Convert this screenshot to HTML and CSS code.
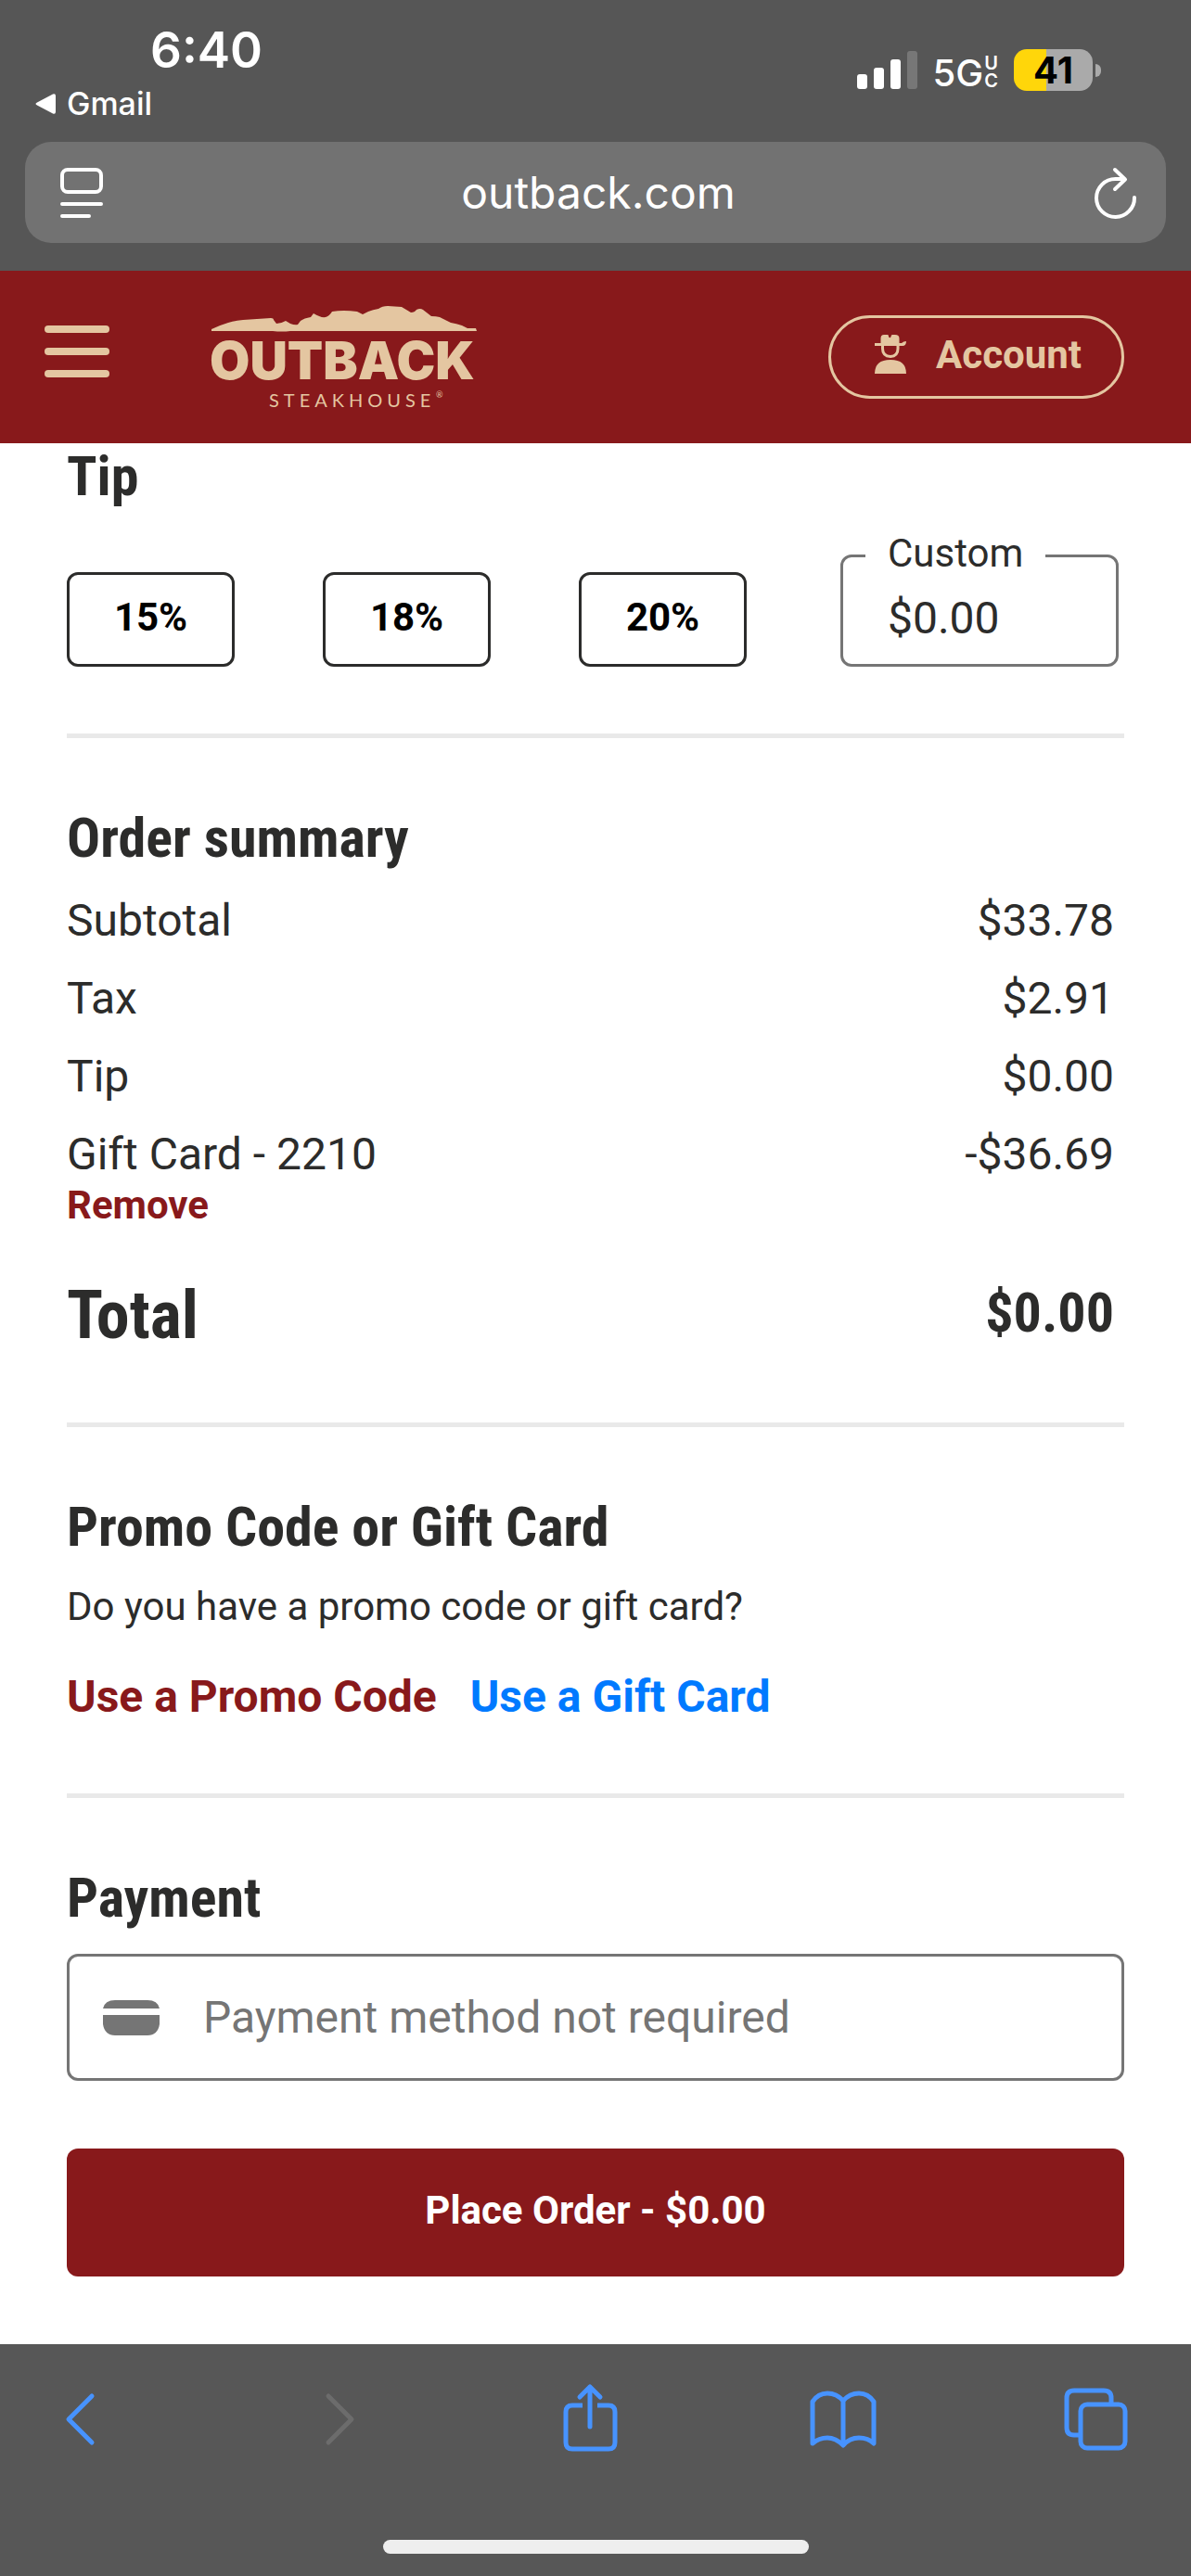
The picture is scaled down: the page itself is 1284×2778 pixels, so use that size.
FILE: index.html
```html
<!DOCTYPE html>
<html lang="en">
<head>
  <meta charset="UTF-8">
  <meta name="viewport" content="width=device-width, initial-scale=1.0">
  <title>Checkout - Outback Steakhouse</title>
  <link rel="stylesheet" href="styles.css">
</head>
<body>

  <!-- Browser top bar -->
  <div class="browser-top">
    <div class="status">
      <div class="status-left">
        <div class="time">6:40</div>
        <a class="back-app" href="#">
          <svg width="22" height="22" viewBox="0 0 22 22"><path d="M2 9.500 19 .5Q22-.5 22 2.500V19.500Q22 22.500 19 21.500L2 12.500Q-1 11 2 9.500Z" fill="#fff"/></svg>
          Gmail
        </a>
      </div>
      <div class="status-right">
        <svg width="65" height="45" viewBox="0 0 65 45" fill="#fff">
          <rect x="0" y="27" width="11" height="16" rx="3"/>
          <rect x="18" y="20" width="11" height="23" rx="3"/>
          <rect x="36" y="11" width="11" height="32" rx="3"/>
          <rect x="54" y="2" width="11" height="41" rx="3" opacity="0.2"/>
        </svg>
        <div class="network">5G<span class="network-uc"><span>U</span><span>C</span></span></div>
        <div class="battery">41</div>
      </div>
    </div>
    <div class="url-bar">
      <button class="icon-button" aria-label="Page menu">
        <svg width="46" height="54" viewBox="0 0 46 54" fill="none" stroke="#fff" stroke-width="4" stroke-linecap="round">
          <rect x="2" y="2" width="42" height="24" rx="6"/>
          <path d="M2 39H44M2 52H31"/>
        </svg>
      </button>
      <span class="url">outback.com</span>
      <button class="icon-button" aria-label="Reload">
        <svg width="46" height="54" viewBox="0 0 46 54" fill="none" stroke="#fff" stroke-width="4" stroke-linecap="round" stroke-linejoin="round">
          <path d="M44 32A20.500 20.500 0 1 1 23.500 12H33M23 2 34 12.500 23 23"/>
        </svg>
      </button>
    </div>
  </div>

  <!-- Site header -->
  <header class="site-header">
    <button class="menu-button" aria-label="Open menu">
      <span></span>
      <span></span>
      <span></span>
    </button>
    <a class="logo" href="#" aria-label="Outback Steakhouse">
      <svg width="290" height="112" viewBox="0 0 290 112" fill="#e4c6a1">
        <path d="M0 28V26Q8 22 18 19 24 17 34 16L64 14Q67 14 67 16L70 20Q75 20 80 17L85 20Q90 22 93 21L96 17Q100 14 107 13L110 9Q118 14 123 13 127 12 130 7 142 5 157 7L163 10 169 7 Q174 5 180 4 184 1 190 1L205 2Q210 5 215 8 219 8 221 5 225 3 228 5L237 12Q242 12 246 13L258 19Q264 20 270 22L276 25 285 25 286 28H85Q76 29 66 28Z"/>
        <text class="logo-name" x="-2" y="80">OUTBACK</text>
        <text class="logo-sub" x="62" y="110">STEAKHOUSE</text>
        <text class="logo-mark" x="242" y="100">®</text>
      </svg>
    </a>
    <button class="account-button">
      <svg width="34" height="42" viewBox="0 0 34 42" fill="#e4c6a1">
        <path d="M0 9H6.500V4Q6.500 0 10 0H14Q15 0 15 2 16.300 4.500 17.600 2 17.600 0 19 0H22Q26.500 0 26.500 4V9H29Q31 7 34 7 34 12 30 12H0Z"/>
        <path d="M8.500 12V15Q8.500 23 17 23.500 25 23 25 15V12" fill="none" stroke="#e4c6a1" stroke-width="3"/>
        <path d="M0 42Q0 27 17 27T34 42Z"/>
      </svg>
      Account
    </button>
  </header>

  <main class="checkout">
    <!-- Tip -->
    <section class="section tip">
      <h2>Tip</h2>
      <div class="tip-row">
        <div class="tip-options">
          <button class="tip-button">15%</button>
          <button class="tip-button">18%</button>
          <button class="tip-button">20%</button>
        </div>
        <fieldset class="custom-tip">
          <legend><label for="custom-tip">Custom</label></legend>
          <input type="text" id="custom-tip" value="$0.00">
        </fieldset>
      </div>
    </section>

    <!-- Order summary -->
    <section class="section">
      <h2>Order summary</h2>
      <div class="summary">
        <div class="row"><span>Subtotal</span><span>$33.78</span></div>
        <div class="row"><span>Tax</span><span>$2.91</span></div>
        <div class="row"><span>Tip</span><span>$0.00</span></div>
        <div class="row"><span>Gift Card - 2210</span><span>-$36.69</span></div>
      </div>
      <button class="remove">Remove</button>
      <div class="total"><span class="total-label">Total</span><span class="total-price">$0.00</span></div>
    </section>

    <!-- Promo code / gift card -->
    <section class="section">
      <h2>Promo Code or Gift Card</h2>
      <p>Do you have a promo code or gift card?</p>
      <div class="links">
        <a class="promo-link" href="#">Use a Promo Code</a>
        <a class="gift-link" href="#">Use a Gift Card</a>
      </div>
    </section>

    <!-- Payment -->
    <section class="section payment">
      <h2>Payment</h2>
      <label class="payment-field">
        <svg width="61" height="38" viewBox="0 0 61 38" fill="#757575">
          <path d="M0 9Q2 0 13 0H48Q59 0 61 9Z"/>
          <path d="M0 16H61V26Q59 38 48 38H13Q2 38 0 26Z"/>
        </svg>
        <input type="text" value="Payment method not required" aria-label="Payment method" readonly>
      </label>
      <button class="place-order">Place Order - $0.00</button>
    </section>
  </main>

  <!-- Browser toolbar -->
  <nav class="toolbar">
    <div class="toolbar-buttons">
      <button class="icon-button" aria-label="Back">
        <svg width="80" height="80" viewBox="0 0 80 80"><path d="M53 16 28 41 53 66"/></svg>
      </button>
      <button class="icon-button disabled" aria-label="Forward" disabled>
        <svg width="80" height="80" viewBox="0 0 80 80"><path d="M34 16 59 41 34 66"/></svg>
      </button>
      <button class="icon-button" aria-label="Share">
        <svg width="80" height="80" viewBox="0 0 80 80">
          <path d="M34 26H23Q16 26 16 33V66Q16 73 23 73H62Q69 73 69 66V33Q69 26 62 26H50" stroke-linecap="butt"/>
          <path d="M42 49V6M31 17 42 6 53 17"/>
        </svg>
      </button>
      <button class="icon-button" aria-label="Bookmarks">
        <svg width="80" height="80" viewBox="0 0 80 80">
          <path d="M42 21Q35 13 25 13T9 22V67Q16 61 25 61T42 69Q49 61 59 61T75 67V22Q69 13 59 13T42 21V68"/>
        </svg>
      </button>
      <button class="icon-button" aria-label="Tabs">
        <svg width="80" height="80" viewBox="0 0 80 80">
          <path d="M24 58H17Q9 58 9 50V18Q9 10 17 10H49Q57 10 57 18V24" stroke-linecap="butt"/>
          <rect x="24" y="25" width="48" height="47" rx="7"/>
        </svg>
      </button>
    </div>
    <div class="home-indicator"></div>
  </nav>

</body>
</html>
```
FILE: styles.css
```css
* {
  box-sizing: border-box;
}
body {
  font-family: Roboto, Arial, sans-serif;
  margin: 0;
  color: #2c2c2b;
  background-color: white;
  display: flex;
  flex-direction: column;
  min-height: 100vh;
}
button {
  font-family: inherit;
  margin: 0;
  padding: 0;
  border: none;
  background: none;
  cursor: pointer;
}
input {
  font-family: inherit;
  color: inherit;
  border: none;
  background: none;
  padding: 0;
  min-width: 0;
}
svg {
  display: block;
  overflow: visible;
}
a {
  text-decoration: none;
}

/* Browser top bar */
.browser-top {
  font-family: Inter, sans-serif;
  background-color: #565656;
  color: white;
  padding: 24px 27px 30px;
}
.status {
  display: flex;
  justify-content: space-between;
  align-items: flex-start;
  margin-bottom: 21px;
}
.time {
  font-size: 53px;
  font-weight: 600;
  line-height: 60px;
  padding-left: 135px;
}
.back-app {
  display: flex;
  align-items: center;
  gap: 12px;
  margin-top: 8px;
  padding-left: 11px;
  color: white;
  font-size: 34px;
  font-weight: 500;
  line-height: 40px;
}
.status-right {
  display: flex;
  align-items: center;
  gap: 17px;
  margin-top: 29px;
  margin-right: 79px;
  height: 45px;
}
.network {
  display: flex;
  align-items: center;
  gap: 1px;
  padding-top: 5px;
  font-size: 40px;
  font-weight: 500;
  line-height: 45px;
}
.network-uc {
  display: flex;
  flex-direction: column;
  font-size: 20px;
  font-weight: 600;
  line-height: 19px;
}
.battery {
  position: relative;
  width: 85px;
  height: 45px;
  border-radius: 14px;
  background: linear-gradient(to right, #ffd60a 41%, #aaaaaa 41%);
  color: black;
  font-size: 40px;
  font-weight: 700;
  line-height: 45px;
  text-align: center;
}
.battery::after {
  content: "";
  position: absolute;
  right: -9px;
  top: 16px;
  width: 6px;
  height: 14px;
  border-radius: 0 6px 6px 0;
  background-color: #aaaaaa;
}
.url-bar {
  display: flex;
  justify-content: space-between;
  align-items: center;
  height: 109px;
  padding: 0 32px 0 38px;
  border-radius: 28px;
  background-color: #727272;
}
.url {
  font-size: 48px;
  line-height: 60px;
}

/* Site header */
.site-header {
  display: flex;
  align-items: center;
  padding: 37px 72px 37px 48px;
  background-color: #88191b;
}
.menu-button {
  display: flex;
  flex-direction: column;
  gap: 16px;
  margin-bottom: 12px;
}
.menu-button span {
  width: 70px;
  height: 8px;
  border-radius: 4px;
  background-color: #e4c6a1;
}
.logo {
  margin-left: 110px;
}
.logo-name {
  font-family: Inter, sans-serif;
  font-size: 56px;
  font-weight: 900;
}
.logo-sub {
  font-family: Lato, sans-serif;
  font-size: 20px;
  letter-spacing: 5px;
}
.logo-mark {
  font-family: Lato, sans-serif;
  font-size: 9px;
}
.account-button {
  display: flex;
  align-items: center;
  gap: 32px;
  height: 90px;
  margin-left: auto;
  padding: 0 43px 6px 47px;
  border: 3px solid #e4c6a1;
  border-radius: 45px;
  color: #e4c6a1;
  font-size: 42px;
  font-weight: 700;
}

/* Checkout */
.checkout {
  flex: 1;
  padding: 0 72px;
}
.section {
  padding: 72px 0;
  border-bottom: 5px solid #e9e9e9;
}
.section.tip {
  padding-top: 0;
}
.section.payment {
  border-bottom: none;
}
h2 {
  font-family: "Roboto Condensed", Roboto, sans-serif;
  font-size: 60px;
  font-weight: 700;
  line-height: 72px;
  margin: 0 0 24px;
}
p {
  font-size: 42px;
  line-height: 52px;
  margin: 0;
}
.tip-row {
  display: flex;
  justify-content: space-between;
  align-items: flex-end;
  padding-right: 6px;
}
.tip-options {
  display: flex;
  gap: 95px;
}
.tip-button {
  width: 181px;
  height: 102px;
  padding-bottom: 6px;
  border: 3px solid #2c2c2b;
  border-radius: 12px;
  color: black;
  font-size: 42px;
  font-weight: 700;
}
.custom-tip {
  width: 300px;
  margin: 0;
  padding: 0 24px;
  border: 3px solid #757575;
  border-radius: 12px;
}
.custom-tip legend {
  padding: 0 24px 4px;
  font-size: 42px;
  line-height: 46px;
}
.custom-tip input {
  display: block;
  width: 100%;
  height: 92px;
  padding: 0 0 8px 24px;
  font-size: 48px;
}

/* Order summary */
.summary {
  display: flex;
  flex-direction: column;
  gap: 26px;
}
.row {
  display: flex;
  justify-content: space-between;
  padding-right: 11px;
  font-size: 48px;
  line-height: 58px;
}
.remove {
  display: block;
  color: #88191b;
  font-size: 42px;
  font-weight: 700;
  line-height: 52px;
}
.total {
  display: flex;
  justify-content: space-between;
  align-items: flex-start;
  margin-top: 50px;
  padding-right: 11px;
  font-family: "Roboto Condensed", Roboto, sans-serif;
  font-weight: 700;
}
.total-label {
  font-size: 72px;
  line-height: 86px;
}
.total-price {
  font-size: 60px;
  line-height: 80px;
}

/* Promo code */
.links {
  display: flex;
  gap: 36px;
  margin-top: 39px;
  font-size: 48px;
  font-weight: 700;
  line-height: 64px;
}
.promo-link {
  color: #88191b;
}
.gift-link {
  color: #007aff;
}

/* Payment */
.payment-field {
  display: flex;
  align-items: center;
  gap: 47px;
  height: 137px;
  padding: 0 36px;
  border: 3px solid #757575;
  border-radius: 12px;
  color: #757575;
}
.payment-field input {
  flex: 1;
  font-size: 48px;
}
.place-order {
  display: block;
  width: 100%;
  height: 138px;
  margin-top: 73px;
  padding-bottom: 6px;
  border-radius: 12px;
  background-color: #88191b;
  color: white;
  font-size: 42px;
  font-weight: 700;
}

/* Browser toolbar */
.toolbar {
  padding: 40px 0 24px;
  background-color: #575757;
}
.toolbar-buttons {
  display: flex;
  justify-content: space-between;
  padding: 0 63px 0 46px;
}
.toolbar svg {
  fill: none;
  stroke: #4793ff;
  stroke-width: 5;
  stroke-linecap: round;
  stroke-linejoin: round;
}
.toolbar .disabled svg {
  stroke: #6c6c6c;
}
.home-indicator {
  width: 459px;
  height: 15px;
  margin: 91px auto 0;
  border-radius: 8px;
  background-color: #eeeeee;
}
```
